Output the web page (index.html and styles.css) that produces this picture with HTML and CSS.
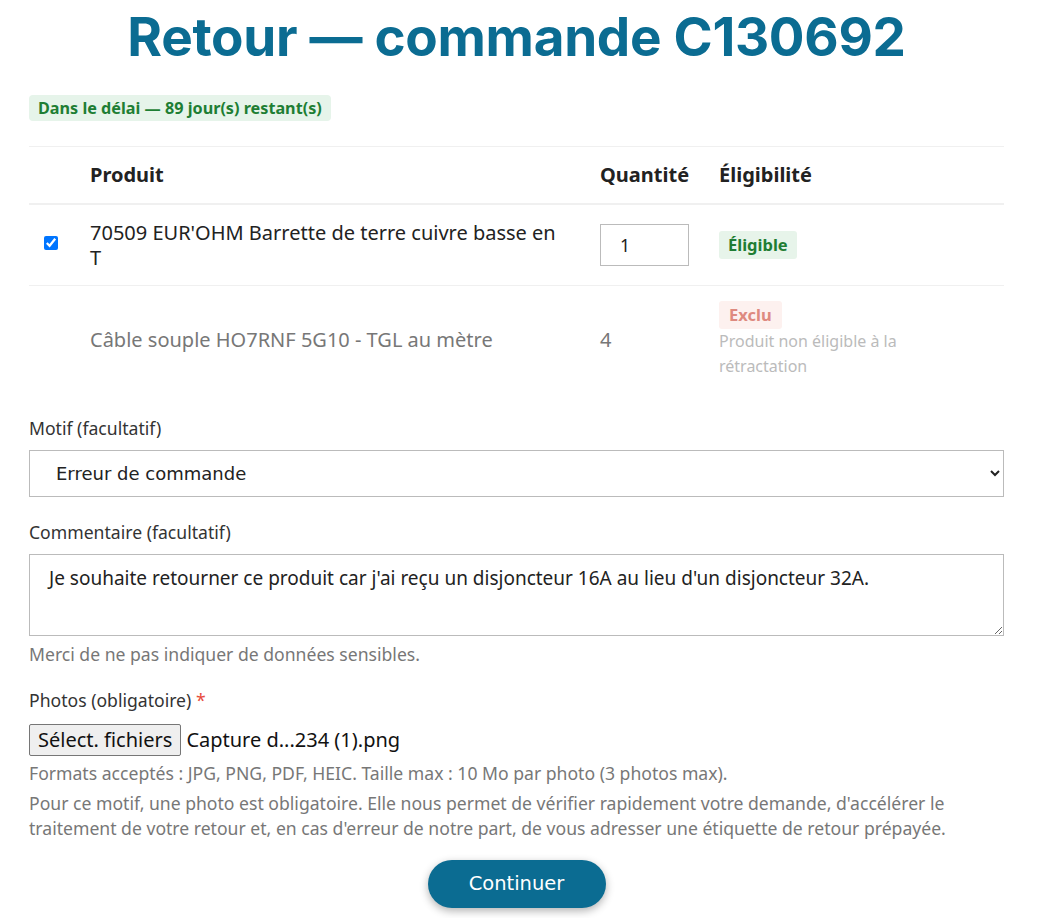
FILE: index.html
```html
<!DOCTYPE html>
<html lang="fr">
<head>
<meta charset="utf-8">
<title>Retour — commande C130692</title>
<link rel="stylesheet" href="styles.css">
</head>
<body>
<main class="page">
  <h1 class="title">Retour — commande C130692</h1>
  <div class="delay-pill">Dans le délai — 89 jour(s) restant(s)</div>

  <table class="items">
    <thead>
      <tr>
        <th class="col-check"></th>
        <th class="col-prod">Produit</th>
        <th class="col-qty">Quantité</th>
        <th class="col-elig">Éligibilité</th>
      </tr>
    </thead>
    <tbody>
      <tr class="row-ok">
        <td class="col-check"><input type="checkbox" checked class="check"></td>
        <td class="col-prod">70509 EUR'OHM Barrette de terre cuivre basse en T</td>
        <td class="col-qty"><input type="text" value="1" class="qty-input"></td>
        <td class="col-elig"><span class="badge badge-ok">Éligible</span></td>
      </tr>
      <tr class="row-excluded">
        <td class="col-check"></td>
        <td class="col-prod">Câble souple HO7RNF 5G10 - TGL au mètre</td>
        <td class="col-qty">4</td>
        <td class="col-elig">
          <span class="badge badge-no">Exclu</span>
          <div class="note">Produit non éligible à la rétractation</div>
        </td>
      </tr>
    </tbody>
  </table>

  <div class="field">
    <label class="label">Motif (facultatif)</label>
    <select class="select">
      <option>Erreur de commande</option>
    </select>
  </div>

  <div class="field">
    <label class="label">Commentaire (facultatif)</label>
    <textarea class="textarea">Je souhaite retourner ce produit car j'ai reçu un disjoncteur 16A au lieu d'un disjoncteur 32A.</textarea>
    <p class="help">Merci de ne pas indiquer de données sensibles.</p>
  </div>

  <div class="field field-photos">
    <label class="label">Photos (obligatoire) <span class="req">*</span></label>
    <div class="file-row">
      <span class="file-btn">Sélect. fichiers</span>
      <span class="file-name">Capture d...234 (1).png</span>
    </div>
    <p class="help help-tight">Formats acceptés : JPG, PNG, PDF, HEIC. Taille max : 10 Mo par photo (3 photos max).</p>
    <p class="help help-tight">Pour ce motif, une photo est obligatoire. Elle nous permet de vérifier rapidement votre demande, d'accélérer le traitement de votre retour et, en cas d'erreur de notre part, de vous adresser une étiquette de retour prépayée.</p>
  </div>

  <div class="actions">
    <button class="btn-primary">Continuer</button>
  </div>
</main>
</body>
</html>
```

FILE: styles.css
```css
* { box-sizing: border-box; }

html, body {
  margin: 0;
  padding: 0;
  background: #fff;
}

body {
  font-family: "Noto Sans", "Open Sans", sans-serif;
  color: #222;
  font-size: 17.6px;
}

.page {
  width: 975px;
  margin-left: 29px;
  padding-top: 5px;
}

.title {
  margin: 0;
  text-align: center;
  font-family: "Inter", "DejaVu Sans", sans-serif;
  font-weight: 700;
  font-size: 53px;
  line-height: 64px;
  letter-spacing: -0.3px;
  color: #0b6c92;
}

.delay-pill {
  display: inline-block;
  margin-top: 26px;
  padding: 0 9px;
  height: 26px;
  line-height: 26px;
  border-radius: 4px;
  background: #e6f4ea;
  color: #1e7e34;
  font-weight: 700;
  font-size: 16.2px;
}

.items {
  width: 100%;
  border-collapse: collapse;
  margin-top: 25px;
  border-top: 1px solid #f0f0f0;
}

.items th {
  text-align: left;
  font-weight: 700;
  font-size: 20px;
  height: 57px;
  padding: 0 12px;
  border-bottom: 2px solid #f0f0f0;
  color: #222;
}

.items td {
  font-size: 20px;
  line-height: 25px;
  padding: 15px 12px 15px;
  vertical-align: middle;
}

.row-ok td { border-bottom: 1px solid #f0f0f0; }

.col-check { width: 49px; text-align: center; }
.items td.col-check { padding: 0 5px 0 0; }
.col-prod { width: 510px; }
.col-qty { width: 119px; }

.check {
  display: block;
  width: 14px;
  height: 14px;
  margin: -3px auto 0;
  accent-color: #0075ff;
}

.items td.col-prod { padding-right: 28px; }

.qty-input {
  width: 89px;
  height: 42px;
  border: 1px solid #bbb;
  border-radius: 0;
  padding: 0 0 0 19px;
  font-family: "Noto Sans", sans-serif;
  font-size: 17.6px;
  color: #222;
  display: block;
}

.badge {
  display: inline-block;
  height: 28px;
  line-height: 28px;
  border-radius: 3px;
  font-weight: 700;
  font-size: 16.5px;
}

.badge-ok {
  background: #e7f4ea;
  color: #1f7d34;
  padding: 0 9px;
}

.row-excluded td { padding-top: 15px; padding-bottom: 18px; }
.row-excluded .col-prod,
.row-excluded .col-qty { color: #777; }

.badge-no {
  background: #fdf1ef;
  color: #de8a80;
  padding: 0 10px;
}

.note {
  color: #bbb;
  font-size: 16px;
  line-height: 25px;
  max-width: 220px;
  margin-top: 0;
}

.field { margin-top: 19px; }
.field + .field { margin-top: 23px; }
.field + .field-photos { margin-top: 21px; }

.label {
  display: block;
  font-size: 17.6px;
  line-height: 24px;
  color: #333;
  margin-bottom: 10px;
}

.field-photos .label { margin-bottom: 12px; }

.req { color: #e74c3c; }

.select {
  display: block;
  width: 100%;
  height: 47px;
  border: 1px solid #bbb;
  border-radius: 0;
  background: #fff;
  padding: 0 0 0 22px;
  font-family: "DejaVu Sans", sans-serif;
  font-size: 18px;
  color: #222;
}

.textarea {
  display: block;
  width: 100%;
  height: 82px;
  border: 1px solid #bbb;
  border-radius: 0;
  padding: 11px 19px;
  font-family: "Noto Sans", sans-serif;
  font-size: 19px;
  line-height: 24px;
  color: #222;
  resize: vertical;
}

.help {
  margin: 6px 0 0;
  color: #777;
  font-size: 17.6px;
  line-height: 25px;
}

.help-tight { margin-top: 5px; }

.file-row {
  display: flex;
  align-items: center;
  gap: 5px;
  margin-top: 1px;
}

.file-btn {
  display: inline-block;
  height: 32px;
  line-height: 30px;
  padding: 0 8px;
  border: 1px solid #767676;
  border-radius: 2px;
  background: #efefef;
  font-size: 20px;
  color: #111;
}

.file-name {
  font-size: 20px;
  color: #111;
}

.actions {
  display: flex;
  justify-content: center;
  margin-top: 19px;
  padding-bottom: 10px;
}

.btn-primary {
  width: 178px;
  height: 48px;
  border: none;
  border-radius: 24px;
  background: #0b6c92;
  color: #fff;
  font-family: "DejaVu Sans", sans-serif;
  font-size: 19.5px;
  box-shadow: 0 3px 8px rgba(0,0,0,0.3);
  cursor: pointer;
}
```
